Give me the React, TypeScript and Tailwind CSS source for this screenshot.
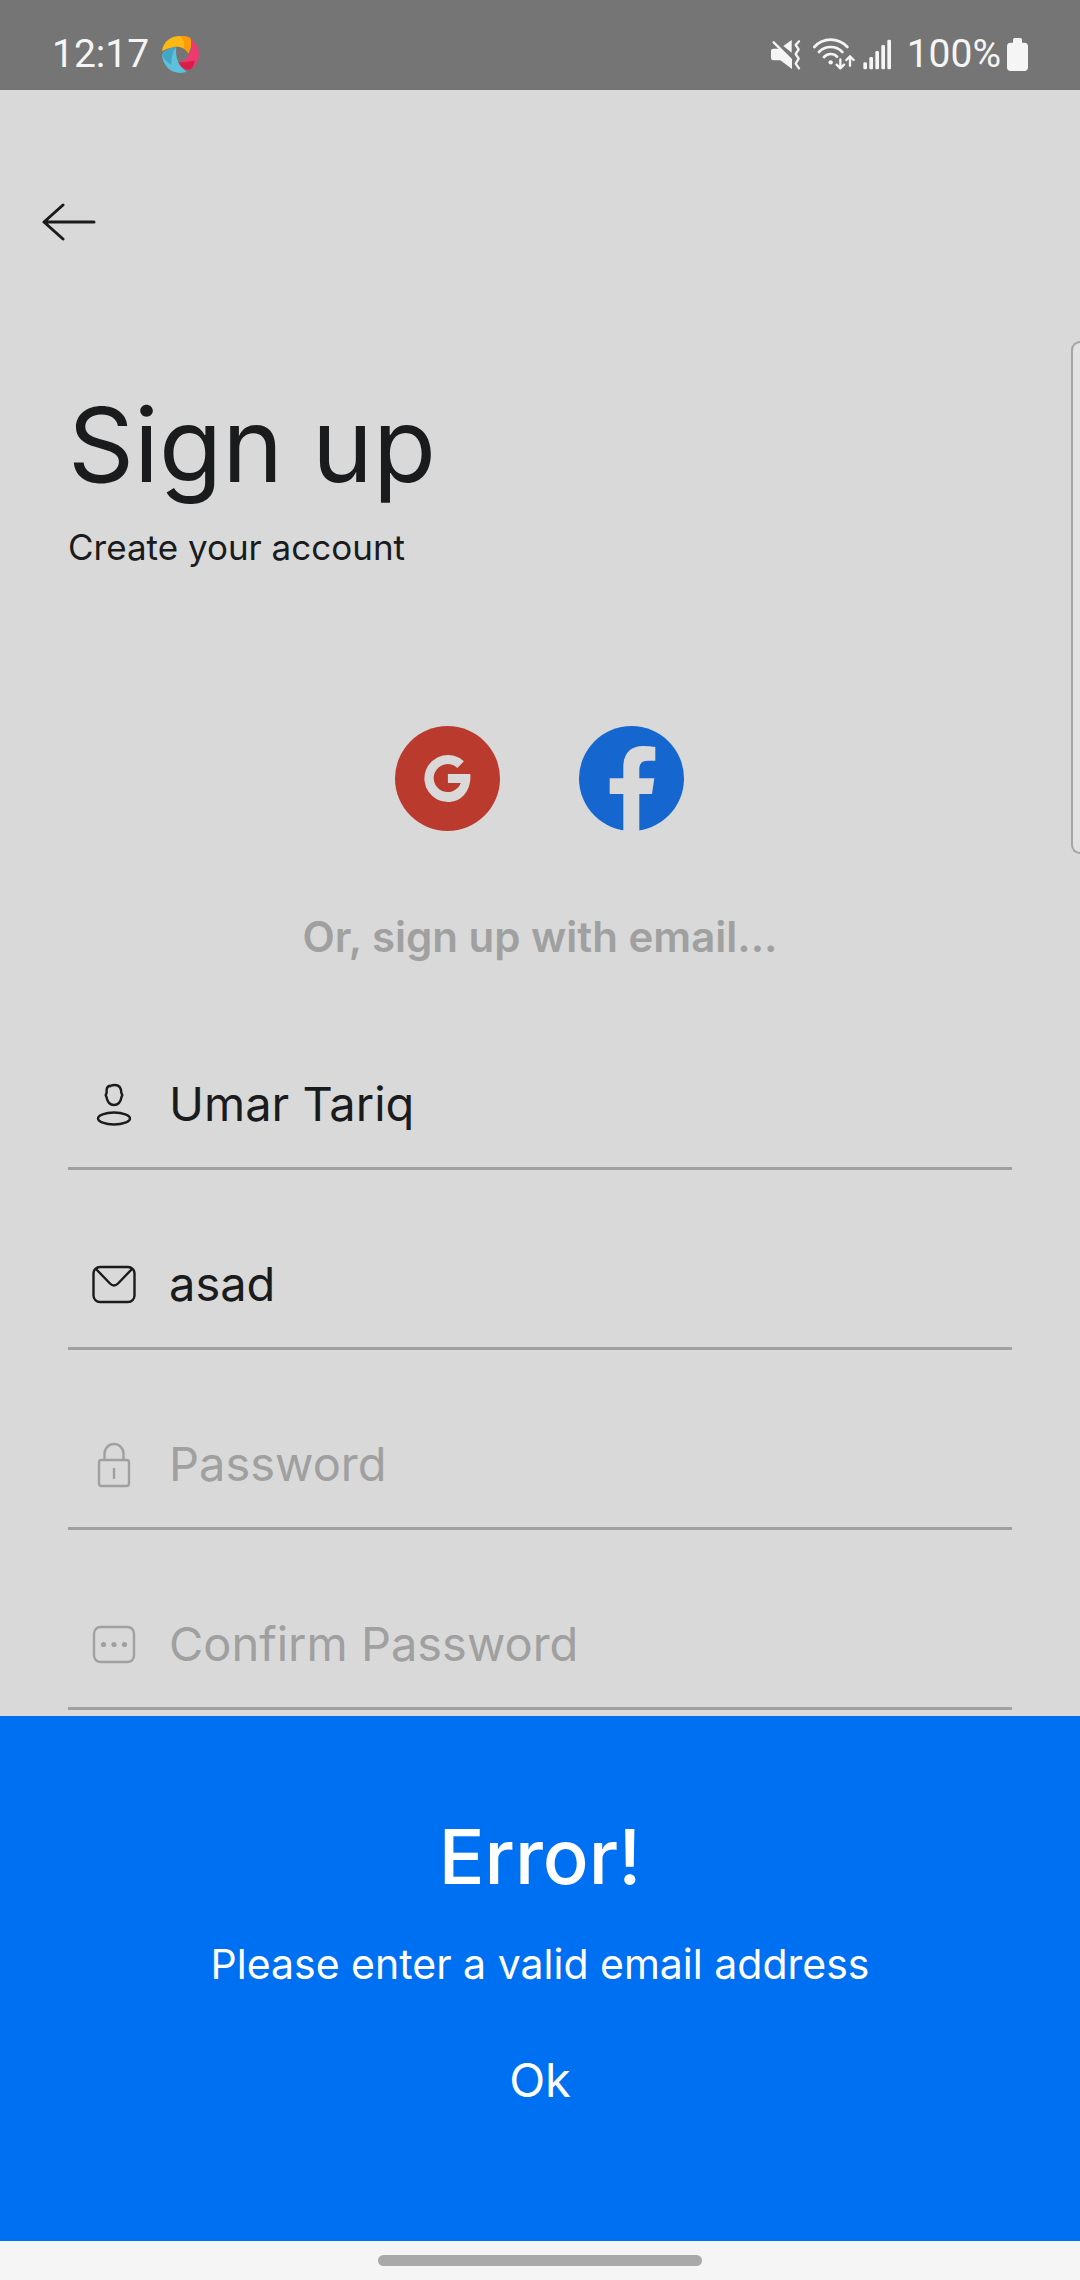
import { useState } from "react";
import type { ReactNode } from "react";

function AppLogo() {
  return (
    <svg viewBox="0 0 112 112" className="size-[37px]" aria-hidden="true">
      <path d="M0 46C4 16 26 0 54 0Q70 0 82 4Q88 8 88 18Q88 36 80 53C70 36 54 30 34 34Q14 37 0 46Z" fill="#fdb913" />
      <path d="M54 0Q70 0 82 4Q88 8 88 18Q88 36 80 53Q76 42 66 37Q72 16 54 0Z" fill="#fc9a0a" />
      <path d="M91 12Q112 30 112 56Q111 82 88 101L82 102Q60 102 45 80C74 78 90 54 91 12Z" fill="#ee3a71" />
      <path d="M99 74Q98 92 84 102Q60 102 45 80Q76 80 99 74Z" fill="#d81e49" />
      <path d="M0 57Q12 36 43 35Q38 84 75 108Q62 112 52 112C22 110 2 86 0 57Z" fill="#5ec1dc" />
      <path d="M0 57Q12 36 43 35Q28 52 28 88Q8 76 0 57Z" fill="#43a6c6" />
    </svg>
  );
}

function MuteIcon() {
  return (
    <svg viewBox="90 113 90 93" className="h-[31px] w-[30px]" fill="#f5f5f5" aria-hidden="true">
      <path d="M97 142H115L153 176V203L118 177H97Q90 177 90 170V149Q90 142 97 142Z" />
      <path d="M152 116V154L127 134Z" />
      <path d="M98 123L150 175" stroke="#f5f5f5" strokeWidth="7" strokeLinecap="round" />
      <path d="M174 120L164 131L173 144L164 158L173 172L164 187L174 201" fill="none" stroke="#f5f5f5" strokeWidth="7" strokeLinecap="round" strokeLinejoin="round" />
    </svg>
  );
}

function WifiIcon() {
  return (
    <svg viewBox="219 113 126 96" className="h-[32px] w-[42px]" fill="none" stroke="#f5f5f5" strokeWidth="8" strokeLinecap="round" strokeLinejoin="round" aria-hidden="true">
      <path d="M223 140Q243 118 272 118T322 140M237 155Q251 140 272 140T307 155M252 170Q260 161 272 161T291 169" />
      <circle cx="272" cy="186" r="6.5" fill="#f5f5f5" stroke="none" />
      <path d="M301 177V203M290 193L301 204L312 193M330 196V169M319 179L330 168L341 179" strokeWidth="7" />
    </svg>
  );
}

function SignalIcon() {
  return (
    <svg viewBox="372 113 84 93" className="h-[31px] w-[28px]" fill="#f5f5f5" aria-hidden="true">
      <rect x="373" y="183" width="11" height="21" rx="4" />
      <rect x="391" y="167" width="11" height="37" rx="4" />
      <rect x="409" y="149" width="11" height="55" rx="4" />
      <rect x="427" y="131" width="11" height="73" rx="4" />
      <rect x="445" y="115" width="11" height="89" rx="4" />
    </svg>
  );
}

function BatteryIcon() {
  return (
    <svg viewBox="801 111 63 99" className="h-[33px] w-[21px]" fill="#f5f5f5" aria-hidden="true">
      <rect x="801" y="125" width="63" height="85" rx="11" />
      <rect x="819" y="111" width="27" height="24" rx="5" />
    </svg>
  );
}

function BackArrow() {
  return (
    <svg viewBox="0 0 54 38" className="h-[38px] w-[54px]" fill="none" stroke="#1a1b1c" strokeWidth="3" strokeLinecap="round" strokeLinejoin="round" aria-hidden="true">
      <path d="M21 2L2 19L21 36M2 19H52" />
    </svg>
  );
}

function GoogleLogo() {
  return (
    <svg viewBox="0 0 105 105" className="size-[105px]" aria-hidden="true">
      <circle cx="52.5" cy="52.5" r="52.5" fill="#ba3a2e" />
      <path d="M68.9 35.3L62.3 41.9A14 14 0 1 0 65.8 57H52.9V48H75.3C76.5 64 67 76 52.7 76A23.5 23.5 0 1 1 68.9 35.3Z" fill="#d9d9d9" />
    </svg>
  );
}

function FacebookLogo() {
  return (
    <svg viewBox="0 0 105 105" className="size-[105px]" aria-hidden="true">
      <circle cx="52.5" cy="52.5" r="52.5" fill="#1666d0" />
      <path d="M44.3 105V68H30.7V52.3H44.3V41C44.3 27 52 20 64 20Q70 20 76.3 21V34.7H69Q60.3 34.7 60.3 43V52.3H75.3L73 68H60.3V105Z" fill="#d9d9d9" />
    </svg>
  );
}

function UserIcon() {
  return (
    <svg viewBox="0 0 46 46" className="size-[46px]" fill="none" stroke="currentColor" strokeWidth="2.4" aria-hidden="true">
      <ellipse cx="23" cy="36.500" rx="16" ry="6" />
      <path d="M20.500 4.500L19 3.800Q15.800 4.300 15.600 8V11L14.700 13L15.600 15.500C16.500 20.500 19.500 23 23 23S29.500 20.500 30.400 15.500L31.300 13L30.400 11C30.200 5.500 28.500 3 24 3Q21 3 20 3.800" strokeLinejoin="round" />
    </svg>
  );
}

function MailIcon() {
  return (
    <svg viewBox="0 0 46 46" className="size-[46px]" fill="none" stroke="currentColor" strokeWidth="2.4" aria-hidden="true">
      <rect x="2.500" y="5" width="41" height="35" rx="6.500" />
      <path d="M5 7L19 21.500Q23 25.500 27 21.500L41 7" />
    </svg>
  );
}

function LockIcon() {
  return (
    <svg viewBox="0 0 46 46" className="size-[46px]" fill="none" stroke="currentColor" strokeWidth="2.4" aria-hidden="true">
      <rect x="8" y="18" width="30" height="26" rx="2.500" />
      <path d="M13.500 18V11.500A9.500 9.500 0 0 1 32.500 11.500V18M23 26V37" />
    </svg>
  );
}

function DotsIcon() {
  return (
    <svg viewBox="0 0 46 46" className="size-[46px]" fill="none" stroke="currentColor" strokeWidth="2.4" aria-hidden="true">
      <rect x="3" y="5" width="40" height="35" rx="6.500" />
      <g fill="currentColor" stroke="none">
        <circle cx="12.500" cy="22.500" r="2.600" />
        <circle cx="23" cy="22.500" r="2.600" />
        <circle cx="33.500" cy="22.500" r="2.600" />
      </g>
    </svg>
  );
}

type FieldProps = { id: string; label: string; type: string; initial?: string; icon: ReactNode };

function Field({ id, label, type, initial = "", icon }: FieldProps) {
  const [value, setValue] = useState(initial);
  return (
    <div className={`flex h-[124px] items-center gap-8 border-b-3 border-[#a0a0a0] pb-1 pl-[23px] ${value ? "text-[#1a1b1c]" : "text-[#a0a0a0]"}`}>
      <label htmlFor={id} aria-label={label}>{icon}</label>
      <input
        id={id}
        type={type}
        value={value}
        placeholder={label}
        onChange={(e) => setValue(e.target.value)}
        className="h-16 min-w-0 flex-1 bg-transparent text-[47px] font-normal outline-none placeholder:text-[#a0a0a0]"
      />
    </div>
  );
}

export default function App() {
  return (
    <div className="flex min-h-screen flex-col bg-[#d9d9d9] font-['Inter','Liberation_Sans',sans-serif] text-[#1a1b1c]">
      <header className="flex h-[90px] items-center justify-between bg-[#757575] px-[52px] pt-[18px] font-['Roboto',sans-serif] text-[39px] leading-none text-[#f5f5f5]">
        <div className="flex items-center gap-[13px]">
          <span>12:17</span>
          <AppLogo />
        </div>
        <div className="flex items-center gap-[6px]">
          <MuteIcon />
          <span className="pl-[6px]"><WifiIcon /></span>
          <span className="pl-[2px]"><SignalIcon /></span>
          <span className="pl-[10px]">100%</span>
          <BatteryIcon />
        </div>
      </header>

      <main className="relative flex-1 pb-[5px]">
        <button type="button" aria-label="Back" className="mt-[97px] block px-[42px] py-4">
          <BackArrow />
        </button>

        <div className="px-[68px] pt-[128px]">
          <h1 className="text-[103px] leading-[120px] font-normal">Sign up</h1>
          <p className="mt-5 text-[35px] leading-[44px] font-normal">Create your account</p>

          <div className="mt-[157px] flex justify-center gap-[79px] pr-[2px]">
            <button type="button" aria-label="Sign up with Google"><GoogleLogo /></button>
            <button type="button" aria-label="Sign up with Facebook"><FacebookLogo /></button>
          </div>

          <p className="mt-20 text-center text-[42px] leading-[52px] font-semibold text-[#a0a0a0]">Or, sign up with email...</p>

          <form className="mt-[83px] flex flex-col gap-14">
            <Field id="name" label="Full Name" type="text" initial="Umar Tariq" icon={<UserIcon />} />
            <Field id="email" label="Email" type="text" initial="asad" icon={<MailIcon />} />
            <Field id="password" label="Password" type="password" icon={<LockIcon />} />
            <Field id="confirm" label="Confirm Password" type="password" icon={<DotsIcon />} />
          </form>
        </div>

        <div className="absolute top-[251px] right-0 h-[513px] w-[9px] rounded-l-[10px] border-2 border-r-0 border-[#a5a5a5] bg-[#e2e2e2]" />
      </main>

      <section role="alertdialog" aria-labelledby="error-title" aria-describedby="error-text" className="flex h-[525px] flex-col items-center bg-[#0070f2] pt-24 text-white">
        <h2 id="error-title" className="text-[76px] leading-[88px] font-medium">Error!</h2>
        <p id="error-text" className="mt-[38px] text-[41px] leading-[52px] font-normal">Please enter a valid email address</p>
        <button type="button" className="mt-[58px] px-10 text-[47px] leading-[64px] font-normal">Ok</button>
      </section>

      <footer className="flex h-[39px] items-center justify-center bg-[#f5f5f5]">
        <div className="h-[11px] w-[324px] rounded-full bg-[#a9a9a9]" />
      </footer>
    </div>
  );
}
